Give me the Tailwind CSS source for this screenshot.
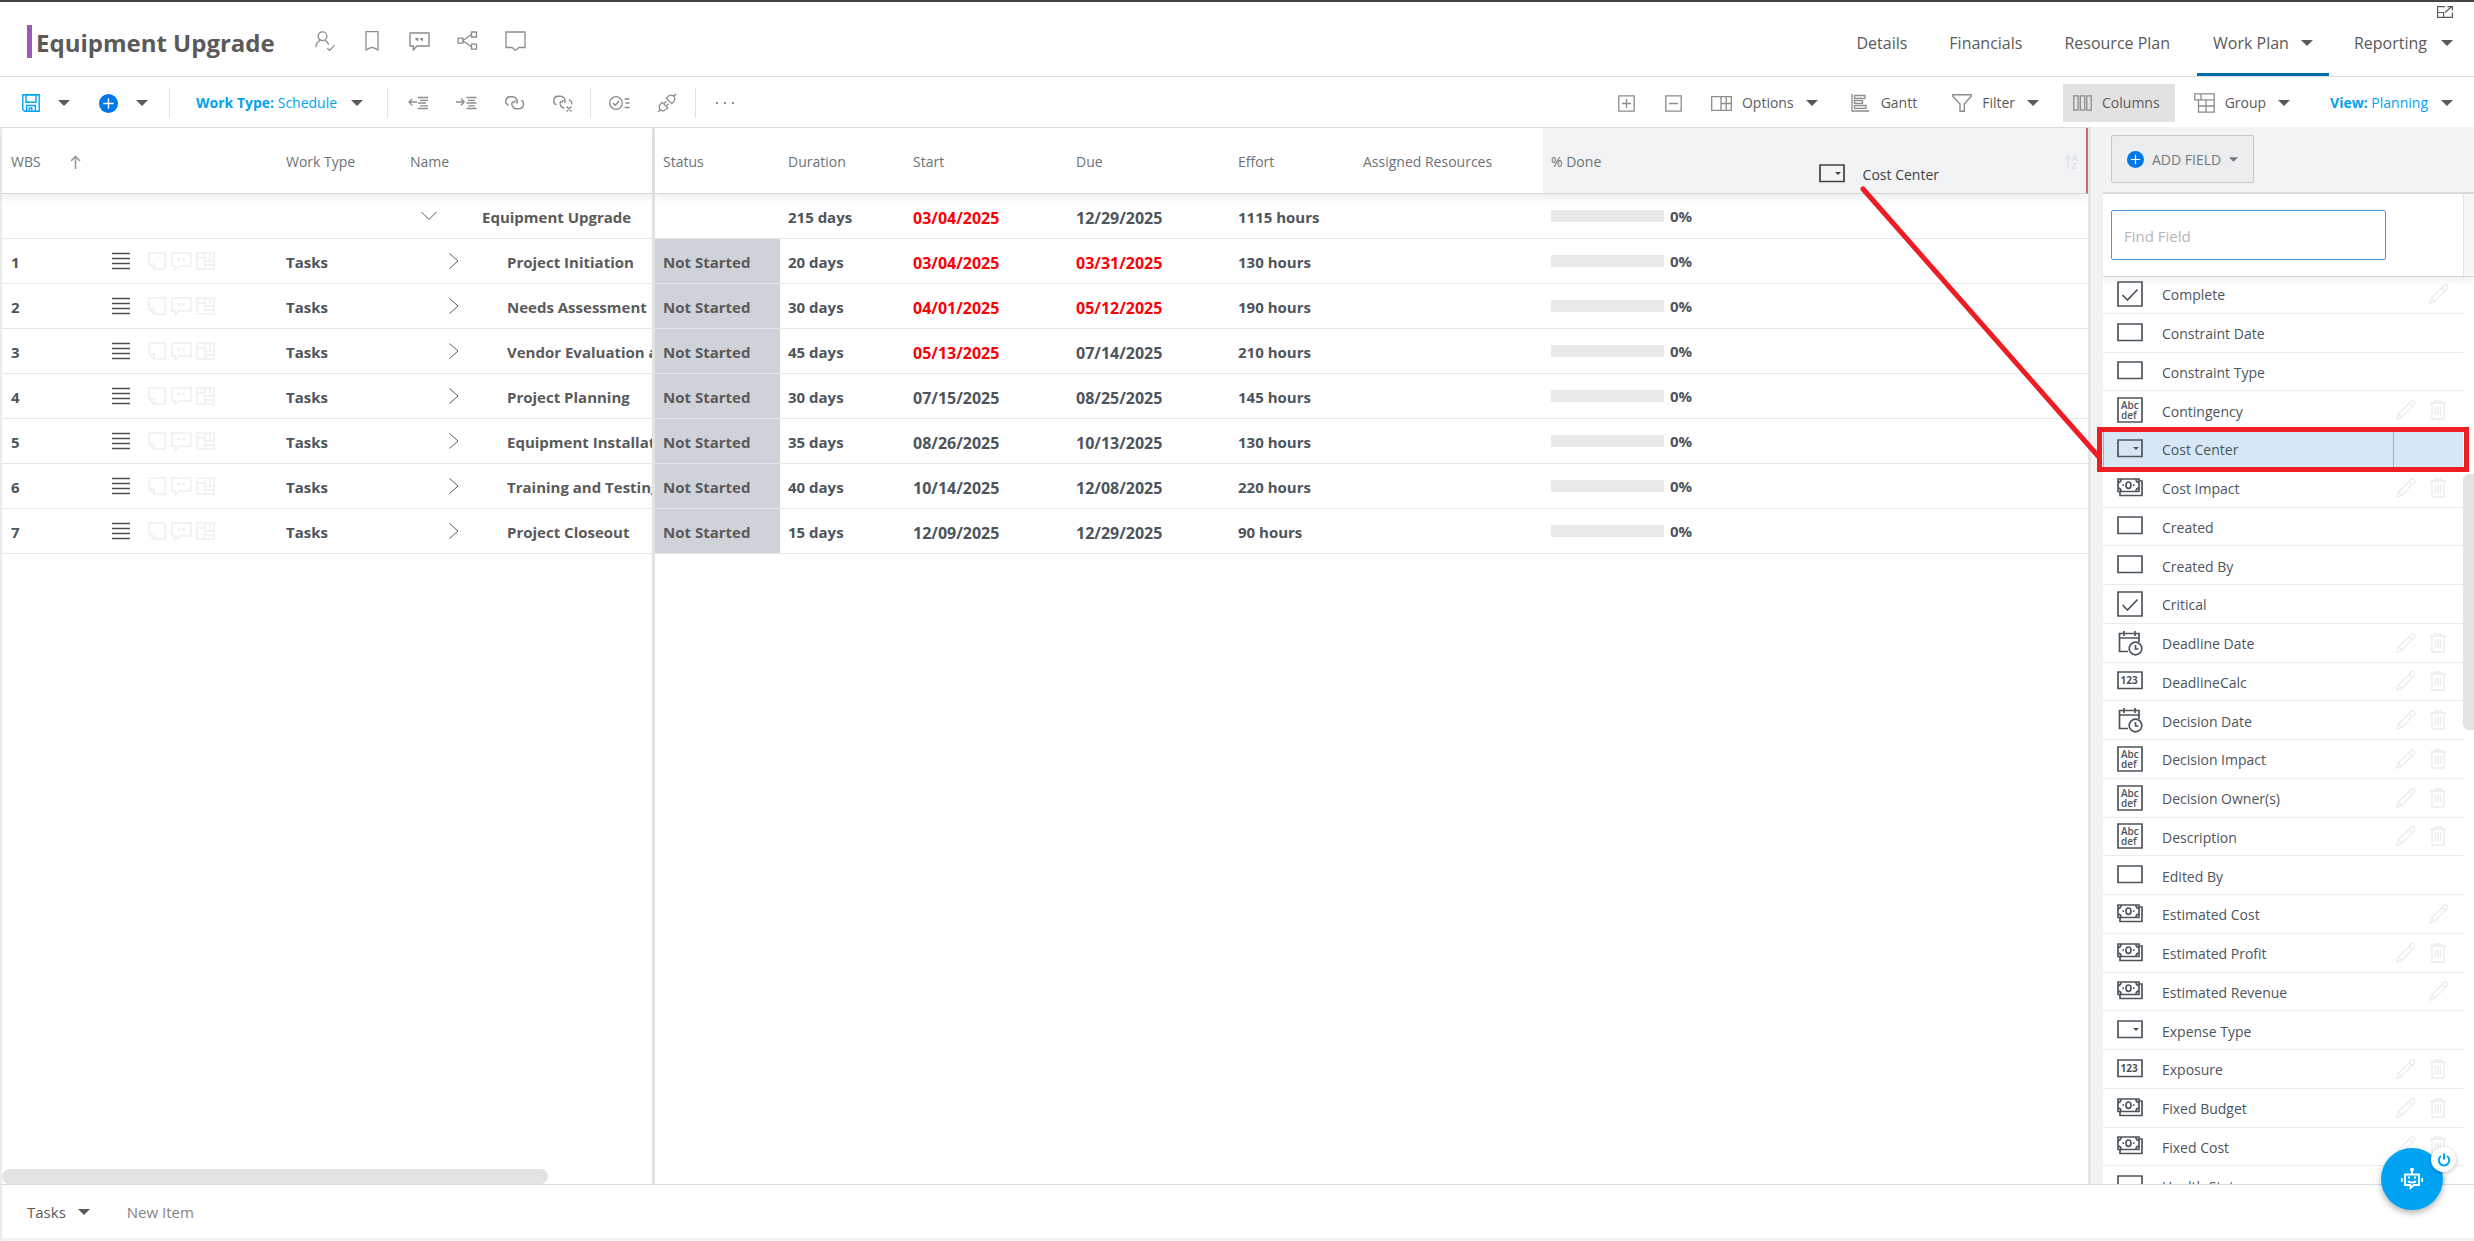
<!DOCTYPE html>
<html lang="en">
<head>
<meta charset="utf-8">
<meta name="viewport" content="width=device-width, initial-scale=1">
<title>Equipment Upgrade - Work Plan</title>
<script src="https://cdn.jsdelivr.net/npm/@tailwindcss/browser@4"></script>
</head>
<body class="flex h-screen flex-col overflow-hidden bg-white font-['Open_Sans',sans-serif] text-sm text-[#5a5a5a]">

<svg class="hidden" xmlns="http://www.w3.org/2000/svg">
  <symbol id="caret" viewBox="0 0 12 6"><path d="M0 0h12L6 6z" fill="currentColor"/></symbol>
  <symbol id="user-check" viewBox="0 0 20 20"><g fill="none" stroke="currentColor" stroke-width="1.3"><circle cx="7.5" cy="5.2" r="4.4"/><path d="M1 16.2c0-3.6 1.6-5.6 4.2-6.8M9.8 9.400c2 .9 3.200 2.200 3.900 4.200M12.300 17.300l2.300 2.100 5-5.300"/></g></symbol>
  <symbol id="bookmark" viewBox="0 0 14 20"><path d="M1 .7h12v18.300l-3.500-1.800L7 16.400l-2.500.8L1 19z" fill="none" stroke="currentColor" stroke-width="1.3"/></symbol>
  <symbol id="quote" viewBox="0 0 21 20"><path d="M1 2h19v13H8l-3.600 3.800V15H1z" fill="none" stroke="currentColor" stroke-width="1.400"/><path d="M6.500 7h2.800v2.200L8 10.600V9.200H6.500zM11.200 7H14v2.200l-1.300 1.400V9.200h-1.500z" fill="currentColor"/></symbol>
  <symbol id="share" viewBox="0 0 21 20"><path d="M1 7.200h5v5H1zM14.500 1h5v5h-5zM14.500 13.200h5v5h-5zM6 9.500l8.500-6M6 10l8.500 5.700" fill="none" stroke="currentColor" stroke-width="1.300"/></symbol>
  <symbol id="comment" viewBox="0 0 21 20"><path d="M1 1h19v15.500h-6L10.500 19.200 7 16.500H1z" fill="none" stroke="currentColor" stroke-width="1.300"/></symbol>
  <symbol id="popout" viewBox="0 0 16 12"><g fill="none" stroke="currentColor" stroke-width="1.200"><path d="M8 .6H.6v10.800h14.800V6.500"/><path d="M.6 6.500h6v5M8 6.500L14.500.8M10.500.6h4.900v4"/></g></symbol>
  <symbol id="save" viewBox="0 0 18 18"><g fill="none" stroke="currentColor" stroke-width="1.400"><path d="M.8 .8h16.400v16.400H2.600L.8 15.400z"/><path d="M4 .8h10v7.400H4zM4.600 17v-5.500h8.800V17M7.200 17v-3h2.600v3"/></g></symbol>
  <symbol id="add" viewBox="0 0 20 20"><circle cx="10" cy="10" r="10" fill="#0078e8"/><path d="M10 4.500v11M4.500 10h11" stroke="#fff" stroke-width="1.400"/></symbol>
  <symbol id="outdent" viewBox="0 0 21 14"><path d="M10 1.500h10M12 4.300h8M10 7h8M12 9.800h8M10 12.500h10M1 6h8M4.200 2.800L1 6l3.200 3.200" fill="none" stroke="currentColor" stroke-width="1.300"/></symbol>
  <symbol id="indent" viewBox="0 0 21 14"><path d="M10.500 1.500h10M12 4.300h7M10.500 7h10M12 9.800h7M10.500 12.500h10M0 6h8M5 2.800L8.200 6 5 9.200" fill="none" stroke="currentColor" stroke-width="1.300"/></symbol>
  <symbol id="link" viewBox="0 0 21 18"><g fill="none" stroke="currentColor" stroke-width="1.400"><path d="M4.500 11.400A4.600 4.600 0 0 1 5.300 2.700h3.400a4.600 4.600 0 0 1 3.800 7M11.500 6.500l-2 2.500M8.700 7.500a4.600 4.600 0 0 0 4 7.200h2.800a4.600 4.600 0 0 0 1.700-8.600"/></g></symbol>
  <symbol id="unlink" viewBox="0 0 21 18"><g fill="none" stroke="currentColor" stroke-width="1.400"><path d="M4.500 10.900A4.600 4.600 0 0 1 5.300 2.200h3.400a4.600 4.600 0 0 1 3.800 7M11.500 6l-2 2.500M8.700 7a4.600 4.600 0 0 0 3.800 7M16.800 5.600a4.600 4.600 0 0 1 3 4.800M14.500 12.500l5 5M19.500 12.500l-5 5"/></g></symbol>
  <symbol id="checklist" viewBox="0 0 21 14"><g fill="none" stroke="currentColor" stroke-width="1.300"><circle cx="7" cy="7" r="6.300"/><path d="M4 7l2.300 2.300L10 5M15.500 3h5M16.500 7h4M15.500 11.500h5"/></g></symbol>
  <symbol id="plug" viewBox="0 0 20 20"><g fill="none" stroke="currentColor" stroke-width="1.300"><path d="M1 19l2.500-2.500M19 1l-2.500 2.500M3.300 16.700c-1.700-1.700-1.300-4.200.3-5.800L5.200 9.300l5.500 5.500-1.600 1.600c-1.600 1.600-4.100 2-5.800.3zM16.700 3.300c-1.700-1.700-4.200-1.300-5.800.3L9.300 5.200l5.500 5.500 1.600-1.600c1.600-1.600 2-4.100.3-5.800zM6.800 10.800l2.500-2.500M9.300 13.300l2.500-2.500"/></g></symbol>
  <symbol id="dots" viewBox="0 0 18 4"><path d="M0 1h2v2H0zM8 1h2v2H8zM16 1h2v2h-2z" fill="currentColor"/></symbol>
  <symbol id="expand" viewBox="0 0 17 17"><path d="M.8.8h15.400v15.400H.8zM8.500 4v9M4 8.500h9" fill="none" stroke="currentColor" stroke-width="1.300"/></symbol>
  <symbol id="collapse" viewBox="0 0 17 17"><path d="M.8.8h15.400v15.400H.8zM4 8.500h9" fill="none" stroke="currentColor" stroke-width="1.300"/></symbol>
  <symbol id="options" viewBox="0 0 21 15"><path d="M.7.7h19.600v13.600H.7zM10 .7v13.600M15.200.7v13.600M10 7.500h10" fill="none" stroke="currentColor" stroke-width="1.300"/></symbol>
  <symbol id="gantt" viewBox="0 0 18 18"><path d="M1 0v17h17M3.500 1.500H14v2.800H3.500zM3.500 6.500h8v2.800h-8zM3.500 11.500H15v2.800H3.500z" fill="none" stroke="currentColor" stroke-width="1.300"/></symbol>
  <symbol id="filter" viewBox="0 0 20 18"><path d="M.8.7h18.400v1.500L12.300 10v7.300H8V10L.8 2.200z" fill="none" stroke="currentColor" stroke-width="1.400"/></symbol>
  <symbol id="columns" viewBox="0 0 19 16"><path d="M.8.8h4.400v14.400H.8zM7.300.8h4.400v14.400H7.300zM13.800.8h4.400v14.400h-4.400z" fill="none" stroke="currentColor" stroke-width="1.300"/></symbol>
  <symbol id="group" viewBox="0 0 21 20"><path d="M.8.8h19.400v6H.8zM4.500 6.800v12.400h15.700V6.800M4.500 13h15.700M12 6.800v12.400M7 .8v6" fill="none" stroke="currentColor" stroke-width="1.300"/></symbol>
  <symbol id="sort-up" viewBox="0 0 11 14"><path d="M5.500 14V1.500M1 6l4.500-4.500L10 6" fill="none" stroke="currentColor" stroke-width="1.600"/></symbol>
  <symbol id="drag" viewBox="0 0 18 18"><path d="M0 1.500h18M0 6.500h18M0 11.500h18M0 16.500h18" stroke="currentColor" stroke-width="1.500"/></symbol>
  <symbol id="note" viewBox="0 0 18 18"><path d="M1 1h16v16H6l-5-5zM1 12h5v5" fill="none" stroke="currentColor" stroke-width="1.600"/></symbol>
  <symbol id="board" viewBox="0 0 19 18"><path d="M1 1h17v16H1zM9 1v16M1 6h8M9 9h9M14 1v8M9 13h9" fill="none" stroke="currentColor" stroke-width="1.500"/></symbol>
  <symbol id="chev-down" viewBox="0 0 16 16"><path d="M.5 4L8 11.500 15.500 4" fill="none" stroke="currentColor"/></symbol>
  <symbol id="chev-right" viewBox="0 0 16 16"><path d="M3.500 .5L12 8l-8.500 7.500" fill="none" stroke="currentColor"/></symbol>
  <symbol id="f-check" viewBox="0 0 26 26"><path d="M1 1h24v24H1z M5.500 14l5 5L20.500 8.500" fill="none" stroke="currentColor" stroke-width="1.700"/></symbol>
  <symbol id="f-box" viewBox="0 0 26 26"><path d="M1 4h24v16.500H1z" fill="none" stroke="currentColor" stroke-width="1.700"/></symbol>
  <symbol id="f-select" viewBox="0 0 26 26"><path d="M1 4h24v16.500H1z" fill="none" stroke="currentColor" stroke-width="1.700"/><path d="M16 11h6l-3 3z" fill="currentColor"/></symbol>
  <symbol id="f-text" viewBox="0 0 26 26"><path d="M1 1h24v24H1z" fill="none" stroke="currentColor" stroke-width="1.700"/><text x="4" y="11.500" font-size="10" font-weight="600" fill="currentColor">Abc</text><text x="4" y="22" font-size="10" font-weight="600" fill="currentColor">def</text></symbol>
  <symbol id="f-num" viewBox="0 0 26 26"><path d="M1 4h24v16.500H1z" fill="none" stroke="currentColor" stroke-width="1.700"/><text x="3.500" y="16" font-size="10" font-weight="700" fill="currentColor">123</text></symbol>
  <symbol id="f-money" viewBox="0 0 26 26"><g fill="none" stroke="currentColor" stroke-width="1.700"><path d="M1 4h21v12.500H1zM3 17v3.500h22V6h-3"/><path d="M1 7.500c2 0 3-1.200 3-3.500M22 7.500c-2 0-3-1.200-3-3.500M1 13c2 0 3 1.200 3 3.500M22 13c-2 0-3 1.200-3 3.500"/><ellipse cx="11.500" cy="10.200" rx="2.500" ry="3.200"/><path d="M5.500 10.200H7M16 10.200h1.500"/></g></symbol>
  <symbol id="f-date" viewBox="0 0 26 26"><g fill="none" stroke="currentColor" stroke-width="1.700"><path d="M11 21.500H2.500v-18H22V12M2.500 8H22M7 1v5M18 1v5"/><circle cx="18.500" cy="18.500" r="6.300"/><path d="M18.500 15v4h3"/></g></symbol>
  <symbol id="pencil" viewBox="0 0 20 20"><path d="M.8 19.200l1.500-5L15 1.500c1-1 2.300-.9 3.200 0s1 2.200 0 3.200L5.500 17.500zM2.500 14l3.300 3.300M13 3.500L16.500 7" fill="none" stroke="currentColor" stroke-width="1.300"/></symbol>
  <symbol id="trash" viewBox="0 0 16 20"><path d="M0 3h16M5 3V1h6v2M2 3v16h12V3M5.500 6.500V15M8 6.500V15M10.500 6.500V15" fill="none" stroke="currentColor" stroke-width="1.400"/></symbol>
</svg>

<header class="relative flex shrink-0 items-stretch justify-between border-t-2 border-b border-t-[#444] border-b-[#dedfe0] pr-[21px] pl-[27px]">
  <div class="flex h-[74px] items-center pt-1">
    <h1 class="flex h-[33px] items-center border-l-[5px] border-[#9a59b5] pt-[3px] pl-1 text-2xl font-bold text-[#5a5a5a]">Equipment Upgrade</h1>
    <div class="ml-10 flex items-center gap-[27px] text-[#8c8c8c]">
      <button aria-label="Assign owner"><svg class="size-5"><use href="#user-check"/></svg></button>
      <button aria-label="Bookmark" class="px-[3px]"><svg class="h-5 w-[14px]"><use href="#bookmark"/></svg></button>
      <button aria-label="Conversations"><svg class="h-5 w-[21px]"><use href="#quote"/></svg></button>
      <button aria-label="Share"><svg class="h-5 w-[21px]"><use href="#share"/></svg></button>
      <button aria-label="Comment"><svg class="h-5 w-[21px]"><use href="#comment"/></svg></button>
    </div>
  </div>
  <nav class="flex items-stretch text-base">
    <a href="#" class="mr-[42px] flex items-center pt-2">Details</a>
    <a href="#" class="mr-[42px] flex items-center pt-2">Financials</a>
    <a href="#" class="mr-[27px] flex items-center pt-2">Resource Plan</a>
    <a href="#" aria-current="page" class="mr-[25px] flex items-center gap-3 border-b-3 border-[#006eab] px-4 pt-[11px]">Work Plan <svg class="h-[6px] w-3"><use href="#caret"/></svg></a>
    <a href="#" class="flex items-center gap-[14px] pt-2">Reporting <svg class="h-[6px] w-3"><use href="#caret"/></svg></a>
  </nav>
  <button aria-label="Open in new window" class="absolute top-1 right-[21px] flex"><svg class="h-3 w-4"><use href="#popout"/></svg></button>
</header>

<div class="flex h-[50px] shrink-0 items-center justify-between pt-[2px] pr-[21px] pl-[22px]">
  <div class="flex items-center text-[#8c8c8c]">
    <button aria-label="Save" class="text-[#00a2f2]"><svg class="size-[18px]"><use href="#save"/></svg></button>
    <button aria-label="Save options" class="ml-[18px] text-[#5a5a5a]"><svg class="h-[6px] w-3"><use href="#caret"/></svg></button>
    <button aria-label="Add" class="ml-[29px]"><svg class="size-[19px]"><use href="#add"/></svg></button>
    <button aria-label="Add options" class="ml-[18px] text-[#5a5a5a]"><svg class="h-[6px] w-3"><use href="#caret"/></svg></button>
    <span class="ml-[21px] h-[30px] w-px bg-[#e2e2e2]"></span>
    <button class="ml-[26px] flex items-center gap-[14px] text-[#00a2f2]"><span><b>Work Type:</b> Schedule</span> <svg class="h-[6px] w-3 text-[#5a5a5a]"><use href="#caret"/></svg></button>
    <span class="ml-6 h-[30px] w-px bg-[#e2e2e2]"></span>
    <div class="ml-5 flex items-center gap-[27px]">
      <button aria-label="Outdent"><svg class="h-[14px] w-[21px]"><use href="#outdent"/></svg></button>
      <button aria-label="Indent"><svg class="h-[14px] w-[21px]"><use href="#indent"/></svg></button>
      <button aria-label="Link"><svg class="h-[18px] w-[21px]"><use href="#link"/></svg></button>
      <button aria-label="Unlink"><svg class="h-[18px] w-[21px]"><use href="#unlink"/></svg></button>
    </div>
    <span class="ml-[17px] h-[30px] w-px bg-[#e2e2e2]"></span>
    <div class="ml-[18px] flex items-center gap-[27px]">
      <button aria-label="Track progress"><svg class="h-[14px] w-[21px]"><use href="#checklist"/></svg></button>
      <button aria-label="Connect"><svg class="size-5"><use href="#plug"/></svg></button>
    </div>
    <span class="ml-[18px] h-[30px] w-px bg-[#e2e2e2]"></span>
    <button aria-label="More" class="ml-5"><svg class="h-1 w-[18px]"><use href="#dots"/></svg></button>
  </div>
  <div class="flex items-center">
    <button aria-label="Expand all" class="text-[#8c8c8c]"><svg class="size-[17px]"><use href="#expand"/></svg></button>
    <button aria-label="Collapse all" class="ml-[30px] text-[#8c8c8c]"><svg class="size-[17px]"><use href="#collapse"/></svg></button>
    <button class="ml-[29px] flex items-center"><svg class="mr-[10px] h-[15px] w-[21px] text-[#8c8c8c]"><use href="#options"/></svg>Options <svg class="ml-3 h-[6px] w-3"><use href="#caret"/></svg></button>
    <button class="ml-[33px] flex items-center"><svg class="mr-3 size-[18px] text-[#8c8c8c]"><use href="#gantt"/></svg>Gantt</button>
    <button class="ml-[35px] flex items-center"><svg class="mr-[10px] h-[18px] w-5 text-[#8c8c8c]"><use href="#filter"/></svg>Filter <svg class="ml-3 h-[6px] w-3"><use href="#caret"/></svg></button>
    <button class="ml-6 flex h-[38px] items-center bg-[#e2e2e2] pr-[15px] pl-[10px]"><svg class="mr-[10px] h-4 w-[19px] text-[#8c8c8c]"><use href="#columns"/></svg>Columns</button>
    <button class="ml-[19px] flex items-center"><svg class="mr-[10px] h-5 w-[21px] text-[#8c8c8c]"><use href="#group"/></svg>Group <svg class="ml-3 h-[6px] w-3"><use href="#caret"/></svg></button>
    <button class="ml-10 flex items-center gap-[13px] text-[#00a2f2]"><span><b>View:</b> Planning</span> <svg class="h-[6px] w-3 text-[#5a5a5a]"><use href="#caret"/></svg></button>
  </div>
</div>

<main class="relative flex min-h-0 flex-1">
  <section aria-label="Tasks" class="flex w-[655px] shrink-0 flex-col border-t border-r-[3px] border-l-2 border-t-[#d9dadb] border-r-[#e3e3e4] border-l-[#ebebeb]">
    <table class="w-full table-fixed border-separate border-spacing-0">
      <colgroup><col class="w-[102px]"><col class="w-[174px]"><col class="w-[124px]"><col></colgroup>
      <thead class="text-left text-[#6b7278] shadow-[0_5px_6px_rgba(0,0,0,0.06)]">
        <tr>
          <th class="h-[66px] border-b border-[#d6d8da] bg-white pt-[2px] pl-[9px] font-normal"><span class="flex items-center gap-[29px]">WBS <svg class="h-[14px] w-[11px] text-[#9a9a9a]"><use href="#sort-up"/></svg></span></th>
          <th class="border-b border-[#d6d8da] bg-white"></th>
          <th class="border-b border-[#d6d8da] bg-white pt-[2px] pl-2 font-normal">Work Type</th>
          <th class="border-b border-[#d6d8da] bg-white pt-[2px] pl-2 font-normal">Name</th>
        </tr>
      </thead>
      <tbody id="left-rows" class="text-[15px] font-bold text-[#4d555c]"></tbody>
    </table>
    <div class="mt-auto h-[15px] w-[84%] rounded-lg bg-[#e3e3e3]"></div>
  </section>

  <section aria-label="Task details" class="min-w-0 flex-1 overflow-hidden border-t border-r-[3px] border-t-[#d9dadb] border-r-[#e4e5e6]">
    <table class="w-full table-fixed border-separate border-spacing-0">
      <colgroup><col class="w-[125px]"><col class="w-[125px]"><col class="w-[163px]"><col class="w-[162px]"><col class="w-[125px]"><col class="w-[188px]"><col></colgroup>
      <thead class="text-left text-[#6b7278] shadow-[0_5px_6px_rgba(0,0,0,0.06)]">
        <tr>
          <th class="h-[66px] border-b border-[#d6d8da] bg-white pt-[2px] pl-2 font-normal">Status</th>
          <th class="border-b border-[#d6d8da] bg-white pt-[2px] pl-2 font-normal">Duration</th>
          <th class="border-b border-[#d6d8da] bg-white pt-[2px] pl-2 font-normal">Start</th>
          <th class="border-b border-[#d6d8da] bg-white pt-[2px] pl-2 font-normal">Due</th>
          <th class="border-b border-[#d6d8da] bg-white pt-[2px] pl-2 font-normal">Effort</th>
          <th class="border-b border-[#d6d8da] bg-white pt-[2px] pl-2 font-normal">Assigned Resources</th>
          <th class="border-r-2 border-b border-r-[#c96a6c] border-b-[#d6d8da] bg-[#f2f3f5] px-2 pt-[2px] font-normal">
            <span class="flex items-center justify-between">% Done
              <svg class="h-4 w-[13px] text-[#e0e2e5]" viewBox="0 0 13 16"><path d="M3 15V2M.5 5L3 2l2.500 3" fill="none" stroke="currentColor" stroke-width="1.500"/><text x="7" y="7" font-size="8" font-weight="700" fill="currentColor">A</text><text x="7" y="15" font-size="8" font-weight="700" fill="currentColor">Z</text></svg>
            </span>
          </th>
        </tr>
      </thead>
      <tbody id="right-rows" class="text-[15px] font-bold text-[#4d555c]"></tbody>
    </table>
  </section>

  <div class="w-3 shrink-0 bg-[#f2f2f3]"></div>

  <aside aria-label="Fields" class="flex w-[371px] shrink-0 flex-col">
    <div class="flex h-[67px] shrink-0 items-start border-b-2 border-[#d9dadc] bg-[#f2f3f5] pt-2 pl-2">
      <button class="flex h-12 items-center rounded-xs border border-[#c6c8ca] bg-[#ecedef] px-[15px] pt-px text-[#72787e]"><svg class="mr-2 size-[17px]"><use href="#add"/></svg>ADD FIELD <svg class="ml-2 h-[5px] w-[9px]"><use href="#caret"/></svg></button>
    </div>
    <div class="flex shrink-0 border-b border-[#d4d6d8] shadow-[0_4px_6px_rgba(0,0,0,0.06)]">
      <div class="flex-1 pt-4 pb-4 pl-2">
        <label for="find" class="sr-only">Find Field</label>
        <input id="find" type="search" placeholder="Find Field" class="h-[50px] w-[275px] rounded-xs border border-[#4a96dc] bg-white px-3 pt-[2px] text-[15px] placeholder:text-[#b4b6b8]">
      </div>
      <div class="w-[11px] border-l border-[#e3e4e6] bg-[#f5f6f7]"></div>
    </div>
    <div class="flex min-h-0 flex-1 overflow-hidden">
      <ul id="fields" class="-mt-[2px] grid h-[930px] flex-1 auto-rows-fr text-[#4d555c]"></ul>
      <div class="w-[11px] shrink-0 pt-[197px]"><div class="h-64 rounded-l-md bg-[#e3e3e3]"></div></div>
    </div>
  </aside>

  <!-- field being dragged onto the grid header -->
  <div class="absolute top-[34px] right-[535px] flex items-center gap-[18px] text-sm text-[#3f3f3f]"><svg class="size-[26px]"><use href="#f-select"/></svg><span class="pt-[2px]">Cost Center</span></div>
  <svg class="pointer-events-none absolute top-[59px] right-[372px] h-[274px] w-[242px]" viewBox="0 0 242 274"><path d="M3 3L238 270" stroke="#ee1c23" stroke-width="5" stroke-linecap="round"/></svg>
  <div class="pointer-events-none absolute top-[300px] right-[5px] h-[45px] w-[372px] border-[5px] border-[#ee1c23]"></div>
</main>

<footer class="relative flex h-[57px] shrink-0 items-center border-t border-b-[3px] border-l-2 border-t-[#dcdddd] border-b-[#f3f3f3] border-l-[#ebebeb] pt-[2px] pl-[25px] text-[15px]">
  <button class="flex items-center gap-3">Tasks <svg class="h-[6px] w-3"><use href="#caret"/></svg></button>
  <button class="ml-[37px] text-[#858585]">New Item</button>
  <div class="absolute right-[31px] bottom-[28px]">
    <button aria-label="Assistant" class="flex size-[62px] items-center justify-center rounded-full bg-[#00a2f2] text-white shadow-[0_3px_6px_rgba(0,0,0,0.3)]">
      <svg class="size-[22px]" viewBox="0 0 22 22" fill="none" stroke="currentColor" stroke-width="1.800"><path d="M4 6.500h14v10.500h-5l-3.500 3V17H4zM11 6.500V3M.8 10v4M21.200 10v4"/><path d="M7 13c1.500 2 6.500 2 8 0"/><circle cx="11" cy="1.800" r="1" fill="currentColor"/><path d="M7 9.500h2M13 9.500h2" stroke-width="2"/></svg>
    </button>
    <button aria-label="Turn assistant off" class="absolute -top-px -right-[13px] flex size-[25px] items-center justify-center rounded-full bg-white text-[#00a2f2] shadow-[0_1px_4px_rgba(0,0,0,0.25)]">
      <svg class="size-[14px]" viewBox="0 0 14 14" fill="none" stroke="currentColor" stroke-width="2"><path d="M4 3a5.200 5.200 0 1 0 6 0M7 .5v6"/></svg>
    </button>
  </div>
</footer>

<script>
const icon = (id, cls) => `<svg class="${cls}"><use href="#${id}"/></svg>`;

const tasks = [
  ['', 'Equipment Upgrade', '215 days', '!03/04/2025', '12/29/2025', '1115 hours'],
  ['1', 'Project Initiation', '20 days', '!03/04/2025', '!03/31/2025', '130 hours'],
  ['2', 'Needs Assessment', '30 days', '!04/01/2025', '!05/12/2025', '190 hours'],
  ['3', 'Vendor Evaluation and Selection', '45 days', '!05/13/2025', '07/14/2025', '210 hours'],
  ['4', 'Project Planning', '30 days', '07/15/2025', '08/25/2025', '145 hours'],
  ['5', 'Equipment Installation', '35 days', '08/26/2025', '10/13/2025', '130 hours'],
  ['6', 'Training and Testing', '40 days', '10/14/2025', '12/08/2025', '220 hours'],
  ['7', 'Project Closeout', '15 days', '12/09/2025', '12/29/2025', '90 hours'],
];
const line = 'border-b border-[#e6e7e8]';
const date = d => d[0] === '!'
  ? `<td class="${line} pt-[3px] pl-2 text-base text-[#fb0007]">${d.slice(1)}</td>`
  : `<td class="${line} pt-[3px] pl-2 text-base">${d}</td>`;

document.getElementById('left-rows').innerHTML = tasks.map(([n, name]) => `<tr>
  <td class="h-[45px] ${line} pt-[3px] pl-[9px]">${n}</td>
  <td class="${line} pl-2">${n ? `<span class="flex items-center text-[#efefef]">${icon('drag', 'mr-[18px] size-[18px] text-[#4f4f4f]')}${icon('note', 'mr-[5px] size-[18px]')}${icon('quote', 'mr-1 h-5 w-[21px]')}${icon('board', 'h-[18px] w-[19px]')}</span>` : ''}</td>
  <td class="${line} pt-[3px] pl-2">${n ? 'Tasks' : ''}</td>
  <td class="${line} overflow-hidden"><span class="flex items-center gap-[45px] overflow-hidden whitespace-nowrap text-[#5a5a5a] ${n ? 'pl-11' : 'pl-[19px]'}">${icon(n ? 'chev-right' : 'chev-down', 'size-4 shrink-0')}<span class="min-w-0 flex-1 overflow-hidden pt-[3px]">${name}</span></span></td>
</tr>`).join('');

document.getElementById('right-rows').innerHTML = tasks.map(([n, , dur, start, due, effort]) => `<tr>
  <td class="h-[45px] ${line} pt-[3px] pl-2 text-[#5a5a5a] ${n ? 'bg-[#cfd2d9]' : ''}">${n ? 'Not Started' : ''}</td>
  <td class="${line} pt-[3px] pl-2">${dur}</td>
  ${date(start)}${date(due)}
  <td class="${line} pt-[3px] pl-2">${effort}</td>
  <td class="${line}"></td>
  <td class="${line} pl-2"><span class="flex items-center gap-[6px]"><span class="h-3 w-[113px] bg-[#e9e9e9]"></span><span class="pt-px">0%</span></span></td>
</tr>`).join('');

/* name, icon, editable, deletable */
const fields = [
  ['Complete', 'check', 1], ['Constraint Date', 'box'], ['Constraint Type', 'box'], ['Contingency', 'text', 1, 1],
  ['Cost Center', 'select'], ['Cost Impact', 'money', 1, 1], ['Created', 'box'], ['Created By', 'box'], ['Critical', 'check'],
  ['Deadline Date', 'date', 1, 1], ['DeadlineCalc', 'num', 1, 1], ['Decision Date', 'date', 1, 1], ['Decision Impact', 'text', 1, 1],
  ['Decision Owner(s)', 'text', 1, 1], ['Description', 'text', 1, 1], ['Edited By', 'box'], ['Estimated Cost', 'money', 1],
  ['Estimated Profit', 'money', 1, 1], ['Estimated Revenue', 'money', 1], ['Expense Type', 'select'], ['Exposure', 'num', 1, 1],
  ['Fixed Budget', 'money', 1, 1], ['Fixed Cost', 'money', 1, 1], ['Health Status', 'box', 1, 1],
];
document.getElementById('fields').innerHTML = fields.map(([name, kind, edit, del]) => {
  const on = name === 'Cost Center';
  return `<li class="flex border-b border-[#ebecee] ${on ? 'bg-[#d6e8f5]' : ''}">
    <span class="flex w-[291px] items-center gap-[19px] border-x pl-[13px] ${on ? 'border-[#7fb0f0]' : 'border-transparent'}">${icon('f-' + kind, 'size-[26px]')}<span class="pt-[3px]">${name}</span></span>
    <span class="flex flex-1 items-center justify-end text-[#ececec] ${del ? 'gap-[14px] pr-[17px]' : 'pr-[14px]'}">
      ${edit ? `<button aria-label="Edit ${name}">${icon('pencil', 'size-5')}</button>` : ''}${del ? `<button aria-label="Delete ${name}">${icon('trash', 'h-5 w-4')}</button>` : ''}
    </span></li>`;
}).join('');
</script>
</body>
</html>
